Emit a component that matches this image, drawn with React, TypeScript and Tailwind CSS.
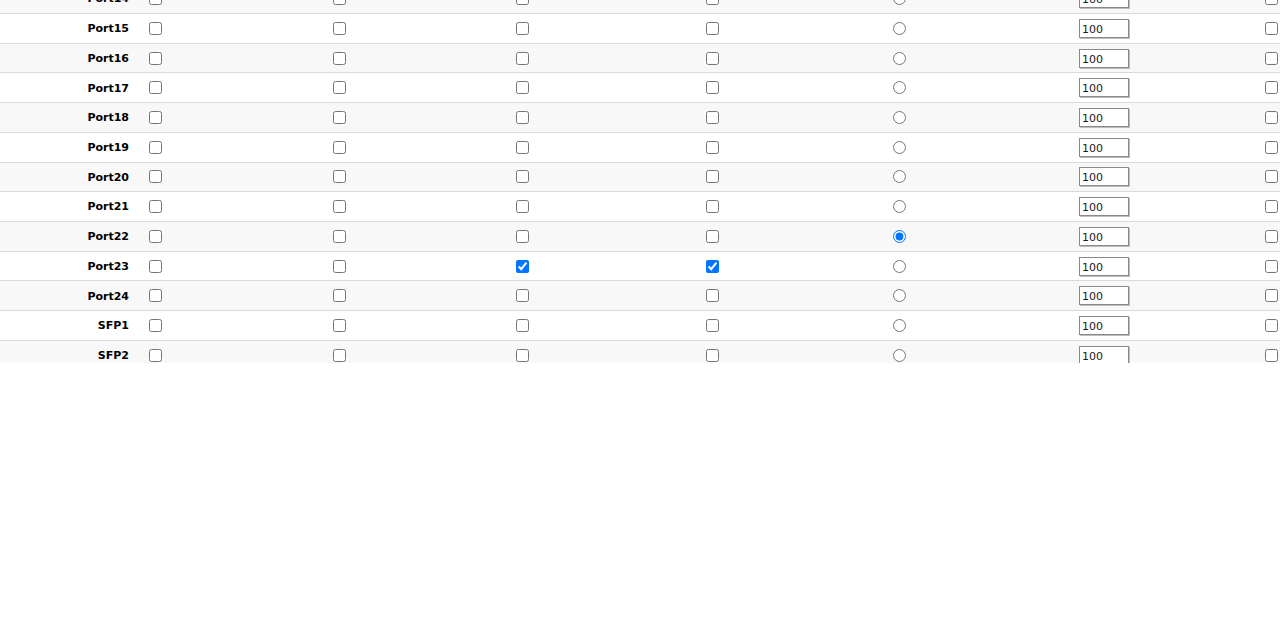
import { useState } from "react";

type PortRow = {
  name: string;
  c1: boolean;
  c2: boolean;
  c3: boolean;
  c4: boolean;
  radio: boolean;
  value: string;
  c5: boolean;
};

function makeRows(): PortRow[] {
  const names = [
    "Port14", "Port15", "Port16", "Port17", "Port18", "Port19", "Port20",
    "Port21", "Port22", "Port23", "Port24", "SFP1", "SFP2",
  ];
  return names.map((name) => ({
    name,
    c1: false,
    c2: false,
    c3: name === "Port23",
    c4: name === "Port23",
    radio: name === "Port22",
    value: "100",
    c5: false,
  }));
}

export default function App() {
  const [rows, setRows] = useState<PortRow[]>(makeRows());

  function toggle(i: number, key: "c1" | "c2" | "c3" | "c4" | "c5") {
    setRows(rows.map((r, j) => (j === i ? { ...r, [key]: !r[key] } : r)));
  }

  function pick(i: number) {
    setRows(rows.map((r, j) => ({ ...r, radio: j === i })));
  }

  function handleValue(i: number, event: React.ChangeEvent<HTMLInputElement>) {
    const { value } = event.target;
    setRows(rows.map((r, j) => (j === i ? { ...r, value } : r)));
  }

  return (
    <main className="w-[1280px] h-[642px] bg-white overflow-hidden font-['DejaVu_Sans',Verdana,sans-serif]">
      <div className="h-[363px] overflow-hidden">
        <div className="-mt-[15.73px]">
          {rows.map((r, i) => (
            <div
              key={r.name}
              className={
                "flex items-center h-[29.73px] border-b border-[#dadada] " +
                (i % 2 === 0 ? "bg-[#f8f8f8]" : "bg-white")
              }
            >
              <span className="w-[129px] shrink-0 pt-[2px] text-right text-[11px] font-bold text-black">
                {r.name}
              </span>
              <input
                type="checkbox"
                className="m-0 ml-[20px] w-[13px] h-[13px] shrink-0"
                checked={r.c1}
                onChange={() => toggle(i, "c1")}
              />
              <input
                type="checkbox"
                className="m-0 ml-[171px] w-[13px] h-[13px] shrink-0"
                checked={r.c2}
                onChange={() => toggle(i, "c2")}
              />
              <input
                type="checkbox"
                className="m-0 ml-[170px] w-[13px] h-[13px] shrink-0"
                checked={r.c3}
                onChange={() => toggle(i, "c3")}
              />
              <input
                type="checkbox"
                className="m-0 ml-[177px] w-[13px] h-[13px] shrink-0"
                checked={r.c4}
                onChange={() => toggle(i, "c4")}
              />
              <input
                type="radio"
                name="mirror"
                className="m-0 ml-[174px] w-[13px] h-[13px] shrink-0"
                checked={r.radio}
                onChange={() => pick(i)}
              />
              <input
                type="text"
                className="ml-[173px] w-[50px] h-[19px] shrink-0 px-[2px] pt-[2px] border border-[#8a8a8a] shadow-[1px_1px_0_#bdbdbd] bg-white text-[11px] leading-[14px] text-[#1a1a1a] outline-none"
                value={r.value}
                onChange={(e) => handleValue(i, e)}
              />
              <input
                type="checkbox"
                className="m-0 ml-[136px] w-[13px] h-[13px] shrink-0"
                checked={r.c5}
                onChange={() => toggle(i, "c5")}
              />
            </div>
          ))}
        </div>
      </div>
    </main>
  );
}
